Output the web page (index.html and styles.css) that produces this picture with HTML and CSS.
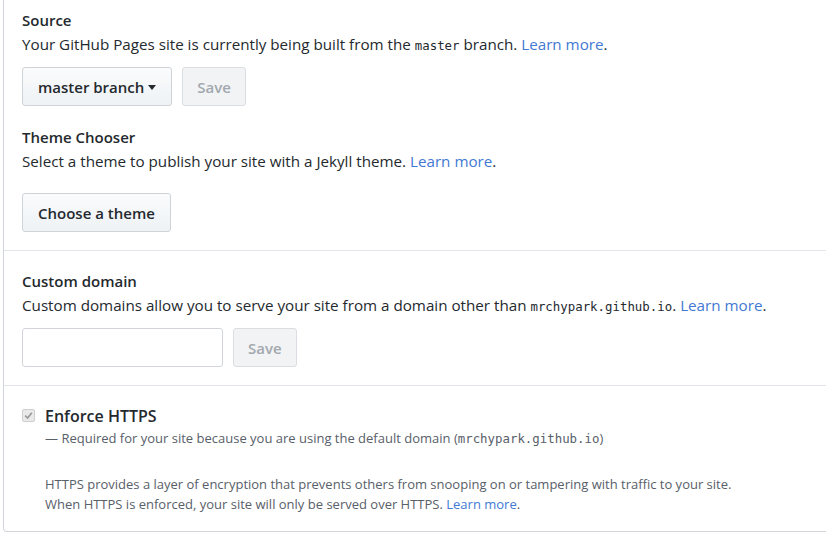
FILE: index.html
```html
<!DOCTYPE html>
<html>
<head>
<meta charset="utf-8">
<link rel="stylesheet" href="styles.css">
</head>
<body>
<div class="box">
  <section class="section first">
    <h3 class="heading">Source</h3>
    <p class="desc">Your GitHub Pages site is currently being built from the <code class="mono">master</code> branch. <a class="link" href="#">Learn more</a>.</p>
    <div class="row">
      <button class="btn">master branch <span class="caret"></span></button>
      <button class="btn disabled">Save</button>
    </div>
    <h3 class="heading second-heading">Theme Chooser</h3>
    <p class="desc">Select a theme to publish your site with a Jekyll theme. <a class="link" href="#">Learn more</a>.</p>
    <div class="row row-theme">
      <button class="btn">Choose a theme</button>
    </div>
  </section>
  <section class="section">
    <h3 class="heading">Custom domain</h3>
    <p class="desc">Custom domains allow you to serve your site from a domain other than <code class="mono">mrchypark.github.io</code>. <a class="link" href="#">Learn more</a>.</p>
    <div class="row">
      <input class="input" type="text">
      <button class="btn disabled">Save</button>
    </div>
  </section>
  <section class="section last">
    <div class="check-row">
      <span class="checkbox">
        <svg width="9" height="9" viewBox="0 0 9 9"><path d="M1.2 4.6 L3.6 7 L7.8 1.8" fill="none" stroke="#9a9a9a" stroke-width="1.7"/></svg>
      </span>
      <div class="check-body">
        <div class="check-title">Enforce HTTPS</div>
        <p class="note">— Required for your site because you are using the default domain (<code class="mono small">mrchypark.github.io</code>)</p>
        <p class="note para">HTTPS provides a layer of encryption that prevents others from snooping on or tampering with traffic to your site.<br>When HTTPS is enforced, your site will only be served over HTTPS. <a class="link" href="#">Learn more</a>.</p>
      </div>
    </div>
  </section>
</div>
</body>
</html>
```
FILE: styles.css
```css
html, body {
  margin: 0;
  padding: 0;
  background: #fff;
  overflow: hidden;
}
body {
  font-family: "Open Sans", "Noto Sans", sans-serif;
  color: #24292e;
  width: 826px;
  height: 536px;
}
.box {
  margin-left: 3px;
  width: 840px;
  border: 1px solid #d1d5da;
  border-top: none;
  border-radius: 0 0 4px 4px;
}
.section {
  padding: 18px 19px 18px 18px;
  border-bottom: 1px solid #e1e4e8;
}
.section.first {
  padding-top: 8px;
}
.section.last {
  border-bottom: none;
  padding-bottom: 17px;
}
.heading {
  margin: 0;
  font-size: 15px;
  font-weight: 600;
  line-height: 24px;
}
.second-heading {
  margin-top: 19px;
}
.desc {
  margin: 0;
  font-size: 15.2px;
  line-height: 24px;
}
.mono {
  font-family: "DejaVu Sans Mono", monospace;
  font-size: 12.4px;
  line-height: 12px;
}
.mono.small {
  font-size: 12.4px;
}
.link {
  color: #4279d3;
  text-decoration: none;
}
.row {
  display: flex;
  gap: 10px;
  margin-top: 11px;
}
.row-theme {
  margin-top: 20px;
}
.btn {
  box-sizing: border-box;
  height: 39px;
  padding: 0 15px;
  font-family: inherit;
  font-size: 15px;
  font-weight: 600;
  color: #24292e;
  background: linear-gradient(#fafbfc, #eff3f6 90%);
  border: 1px solid #cfd3d7;
  border-radius: 3px;
  display: flex;
  align-items: center;
  gap: 4px;
}
.btn.disabled {
  color: #a3a8ae;
  background: #f1f3f5;
  border-color: #dadde1;
  padding: 0 14px;
}
.caret {
  width: 0;
  height: 0;
  border-top: 5px solid #24292e;
  border-left: 4px solid transparent;
  border-right: 4px solid transparent;
  margin-top: 1px;
}
.input {
  box-sizing: border-box;
  width: 201px;
  height: 39px;
  border: 1px solid #d1d5da;
  border-radius: 3px;
  background: #fff;
}
.check-row {
  display: flex;
  gap: 10px;
}
.checkbox {
  box-sizing: border-box;
  width: 13px;
  height: 13px;
  margin-top: 5px;
  border: 1px solid #cfcfcf;
  border-radius: 2px;
  background: #e9e9e9;
  display: flex;
  align-items: center;
  justify-content: center;
  flex: none;
}
.check-title {
  font-size: 16px;
  font-weight: 600;
  line-height: 24px;
}
.note {
  margin: 0;
  font-size: 13px;
  line-height: 20px;
  color: #586069;
}
.note.para {
  margin-top: 26px;
}
```
